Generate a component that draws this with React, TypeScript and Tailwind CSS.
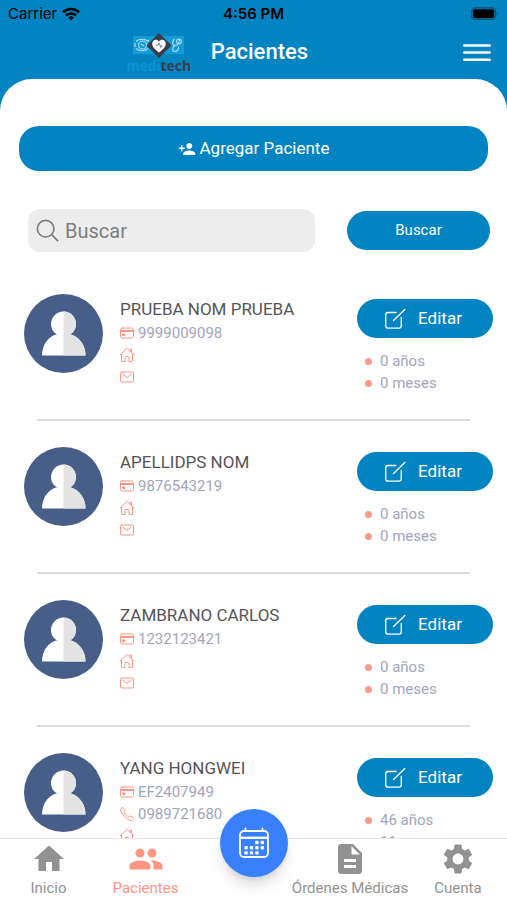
import type { ComponentType } from "react";
import {
  IoCallOutline,
  IoCardOutline,
  IoHomeOutline,
  IoMailOutline,
  IoSearchOutline,
} from "react-icons/io5";
import { MdDescription, MdGroup, MdHome, MdPersonAdd, MdSettings } from "react-icons/md";

interface Patient {
  name: string;
  document: string;
  phone?: string;
  years: number;
  months: number;
}

const patients: Patient[] = [
  { name: "PRUEBA NOM PRUEBA", document: "9999009098", years: 0, months: 0 },
  { name: "APELLIDPS NOM", document: "9876543219", years: 0, months: 0 },
  { name: "ZAMBRANO CARLOS", document: "1232123421", years: 0, months: 0 },
  {
    name: "YANG HONGWEI",
    document: "EF2407949",
    phone: "0989721680",
    years: 46,
    months: 11,
  },
];

type IconType = ComponentType<{ className?: string }>;

function StatusBar() {
  return (
    <div className="grid h-7 grid-cols-3 items-center px-2 font-['Inter',sans-serif] text-[15px] text-black">
      <div className="flex items-center gap-1">
        <span>Carrier</span>
        <svg viewBox="0 0 20 16" className="h-4 w-5" fill="none" stroke="currentColor">
          <path d="M2 6.2a11.6 11.6 0 0 1 16 0" strokeWidth="2.7" />
          <path d="M5 9.5a7.2 7.2 0 0 1 10 0" strokeWidth="2.5" />
          <path d="M10 14.4 7.2 11.5a4 4 0 0 1 5.6 0z" fill="currentColor" stroke="none" />
        </svg>
      </div>
      <span className="text-center font-semibold">4:56 PM</span>
      <svg viewBox="0 0 29 14" className="h-3.5 w-7 justify-self-end">
        <rect x="0.7" y="0.7" width="24.6" height="12" rx="3.6" fill="none" stroke="#064f75" strokeWidth="1.2" />
        <rect x="2" y="2" width="22" height="9.4" rx="2.4" fill="#000" />
        <path d="M26.6 4.6c1.8.6 1.8 3.6 0 4.2z" fill="#064f75" />
      </svg>
    </div>
  );
}

function Logo() {
  return (
    <div className="flex w-16 flex-col items-center">
      <svg viewBox="0 0 52 28" className="h-7 w-[52px]" fill="none">
        <rect y="4" width="51" height="18" fill="#149bd9" />
        <g stroke="#a9dcf4" strokeWidth="1.1">
          <circle cx="9.5" cy="13" r="4" />
          <path d="M3 9.5c3-3 9-3 12 0M3 16.5c3 3 9 3 12 0M8 12l3 2M2 11v4M16 8l-2 2" />
          <path d="M41.5 7c-2.500 2.500-2.500 6.500.5 6.500s5-3.500 4.500-6.500" />
          <path d="M42 13.500c-3 1.500-3 6 0 6s3.500-3 3.500-5" />
          <circle cx="46" cy="9.500" r="2.400" />
        </g>
        <path d="M26 1 38.500 13.500 26 26 13.500 13.500z" fill="#363d46" />
        <path
          d="M26 20.500c-4-3.200-6.800-5.500-6.800-8.800 0-4.200 5-5.200 6.800-1.900 1.800-3.300 6.800-2.300 6.800 1.900 0 3.300-2.800 5.600-6.800 8.800z"
          fill="#fff"
        />
        <path d="m23 13.500 2-.5 1.200-2 1.500 4.500 1.300-2.500" stroke="#68717a" strokeWidth="0.9" />
      </svg>
      <span className="font-['Open_Sans',sans-serif] text-sm leading-3 font-semibold text-[#0f96d6]">
        medi<span className="font-bold text-[#36414c]">tech</span>
      </span>
    </div>
  );
}

function Header() {
  return (
    <header className="flex h-[51px] items-center pr-4 pb-1 pl-[25%] text-white">
      <Logo />
      <h1 className="ml-5 flex-1 text-[22px] leading-6 font-medium">Pacientes</h1>
      <button type="button" aria-label="Menú">
        <svg viewBox="0 0 28 20" className="h-5 w-7" stroke="currentColor" strokeWidth="2.400" strokeLinecap="round">
          <path d="M1.200 3.500h25.600M1.200 10.500h25.600M1.200 17.700h25.600" />
        </svg>
      </button>
    </header>
  );
}

// head and shoulders, the right half repeated in grey
function Avatar() {
  return (
    <svg viewBox="0 0 79 79" className="size-[79px] shrink-0">
      <circle cx="39.500" cy="39.500" r="39.500" fill="#475f88" />
      <g fill="#fff">
        <circle cx="39.500" cy="30" r="12.500" />
        <path d="M18 61.500C18 50 25 42.500 32 40.500h15c7 2 14.500 9.500 14.500 21z" />
      </g>
      <g fill="#e3e3e3">
        <path d="M39.500 17.500a12.500 12.500 0 0 1 0 25z" />
        <path d="M39.500 40.500H47c7 2 14.500 9.500 14.500 21h-22z" />
      </g>
    </svg>
  );
}

function InfoLine({ icon: Icon, text }: { icon: IconType; text?: string }) {
  return (
    <li className="-ml-px flex h-[22px] items-center gap-[3px] text-[15px]">
      <Icon className="size-4 text-[#ff9683]" />
      {text}
    </li>
  );
}

function Age({ text }: { text: string }) {
  return (
    <li className="flex h-[22px] items-center gap-2 text-[15px]">
      <span className="size-[7px] rounded-full bg-[#fb9a8b]" />
      {text}
    </li>
  );
}

function PatientRow({ patient }: { patient: Patient }) {
  return (
    <li className="pt-[26px]">
      <div className="flex min-h-[125px] items-start pr-[14px] pl-6 text-[#a2a5bb]">
        <Avatar />
        <div className="ml-[17px] flex-1 pt-0.5">
          <h2 className="text-[17px] leading-[26px] text-[#555555]">{patient.name}</h2>
          <ul>
            <InfoLine icon={IoCardOutline} text={patient.document} />
            {patient.phone && <InfoLine icon={IoCallOutline} text={patient.phone} />}
            <InfoLine icon={IoHomeOutline} />
            <InfoLine icon={IoMailOutline} />
          </ul>
        </div>
        <div className="w-[136px] pt-[5px]">
          <button
            type="button"
            className="flex h-[39px] w-full items-center justify-center gap-3 rounded-full bg-[#0284c2] pr-1 text-[17px] text-white"
          >
            <svg viewBox="0 0 22 22" className="size-[22px]" fill="none" stroke="currentColor" strokeWidth="1.400" strokeLinecap="round">
              <path d="M12 4.500H4a2.300 2.300 0 0 0-2.300 2.300v11A2.300 2.300 0 0 0 4 20.100h11a2.300 2.300 0 0 0 2.300-2.300V9.500" />
              <path d="m9.500 12.500 11.300-11" />
            </svg>
            Editar
          </button>
          <ul className="mt-3 pl-2">
            <Age text={`${patient.years} años`} />
            <Age text={`${patient.months} meses`} />
          </ul>
        </div>
      </div>
      <hr className="mx-[37px] border-t-2 border-[#dcdcdc]" />
    </li>
  );
}

function Tab({ icon: Icon, label, active }: { icon: IconType; label: string; active?: boolean }) {
  return (
    <a
      href="#"
      aria-current={active ? "page" : undefined}
      className={`flex flex-col items-center whitespace-nowrap ${active ? "text-[#ff9683]" : "text-[#929292]"}`}
    >
      <Icon className="size-9" />
      <span className="text-[15px] leading-[22px]">{label}</span>
    </a>
  );
}

function CalendarButton() {
  return (
    <button
      type="button"
      aria-label="Agenda"
      className="absolute -top-[30px] left-1/2 flex size-[68px] -translate-x-1/2 items-center justify-center rounded-full bg-[#3880ff] text-white shadow-lg shadow-black/15"
    >
      <svg viewBox="0 0 32 32" className="size-8" fill="none" stroke="currentColor" strokeWidth="1.800">
        <rect x="2" y="4" width="28" height="26" rx="4" />
        <path d="M2 10.800h28" strokeWidth="2.400" />
        <path d="M7.500 1.500V4M24.500 1.500V4" strokeLinecap="round" />
        <g fill="currentColor" stroke="none">
          <rect x="17.200" y="13.800" width="3.400" height="3.400" rx="0.800" />
          <rect x="22.600" y="13.800" width="3.400" height="3.400" rx="0.800" />
          <rect x="6.400" y="19" width="3.400" height="3.400" rx="0.800" />
          <rect x="11.800" y="19" width="3.400" height="3.400" rx="0.800" />
          <rect x="17.200" y="19" width="3.400" height="3.400" rx="0.800" />
          <rect x="22.600" y="19" width="3.400" height="3.400" rx="0.800" />
          <rect x="6.400" y="24.200" width="3.400" height="3.400" rx="0.800" />
          <rect x="11.800" y="24.200" width="3.400" height="3.400" rx="0.800" />
          <rect x="17.200" y="24.200" width="3.400" height="3.400" rx="0.800" />
        </g>
      </svg>
    </button>
  );
}

function BottomNav() {
  return (
    <nav className="relative flex h-[62px] shrink-0 justify-between border-t border-[#e8e8e8] bg-white pt-0.5">
      <div className="grid w-[194px] grid-cols-2">
        <Tab icon={MdHome} label="Inicio" />
        <Tab icon={MdGroup} label="Pacientes" active />
      </div>
      <CalendarButton />
      <div className="grid grid-cols-[118px_98px]">
        <Tab icon={MdDescription} label="Órdenes Médicas" />
        <Tab icon={MdSettings} label="Cuenta" />
      </div>
    </nav>
  );
}

export default function App() {
  return (
    <div className="flex h-screen flex-col overflow-hidden bg-[#0284c2] font-['Roboto',sans-serif]">
      <StatusBar />
      <Header />
      <main className="min-h-0 flex-1 overflow-hidden rounded-t-[32px] bg-white pt-[47px]">
        <div className="px-[19px]">
          <button
            type="button"
            className="flex h-[45px] w-full items-center justify-center gap-1 rounded-[20px] bg-[#0284c2] text-[17px] text-white"
          >
            <MdPersonAdd className="size-[18px]" />
            Agregar Paciente
          </button>
        </div>
        <form className="mt-[38px] flex items-center gap-8 pr-[17px] pl-7" onSubmit={(e) => e.preventDefault()}>
          <label className="flex h-[43px] min-w-0 flex-1 items-center gap-1 rounded-xl bg-[#ededed] px-1.5 text-[#7d7d7d]">
            <IoSearchOutline className="size-[27px] shrink-0" />
            <input
              type="text"
              aria-label="Buscar"
              placeholder="Buscar"
              className="w-full min-w-0 bg-transparent text-xl outline-none placeholder:text-[#7d7d7d]"
            />
          </label>
          <button type="submit" className="h-[39px] w-[143px] rounded-[20px] bg-[#0284c2] text-[15px] text-white">
            Buscar
          </button>
        </form>
        <ul className="mt-4">
          {patients.map((p) => (
            <PatientRow key={p.document} patient={p} />
          ))}
        </ul>
      </main>
      <BottomNav />
    </div>
  );
}
